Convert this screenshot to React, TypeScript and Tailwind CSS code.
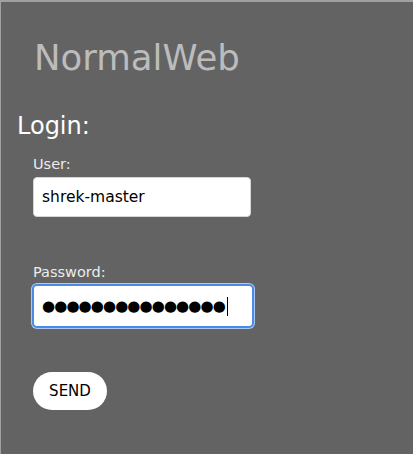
import React from "react";

export default function App() {
  return (
    <div
      className="h-[454px] w-[413px] bg-[#636363] border-t-2 border-l border-[#a0a0a0] overflow-hidden"
      style={{ fontFamily: '"DejaVu Sans", sans-serif' }}
    >
      <h1 className="pl-[33px] pt-[34px] text-[35.5px] leading-[44px] text-[#bcbcbc]">
        NormalWeb
      </h1>
      <h2 className="pl-[16px] mt-[31px] text-[24px] leading-[30px] text-white">
        Login:
      </h2>
      <form className="pl-[32px] mt-[14px] flex flex-col items-start">
        <label className="text-[14.5px] leading-[18px] text-[#ececec]">User:</label>
        <input
          readOnly
          value="shrek-master"
          className="mt-[4px] w-[218px] h-[40px] rounded-[4px] bg-white border border-[#d6d6d6] px-[8px] text-[15.5px] text-black outline-none"
        />
        <label className="mt-[46px] text-[14.5px] leading-[18px] text-[#ececec]">
          Password:
        </label>
        <div className="mt-[3px] ml-[-1px] w-[222px] h-[44px] rounded-[5px] border-2 border-[#4b8be6] ring-1 ring-[#aac8f0] bg-white flex items-center px-[8px]">
          <span className="text-[15px] tracking-[-0.9px] text-black leading-none">
            {"●".repeat(15)}
          </span>
          <span className="ml-[2px] w-[1px] h-[19px] bg-black" />
        </div>
        <button
          type="button"
          className="mt-[44px] w-[74px] h-[38px] rounded-full bg-white text-[15px] text-black"
        >
          SEND
        </button>
      </form>
    </div>
  );
}
